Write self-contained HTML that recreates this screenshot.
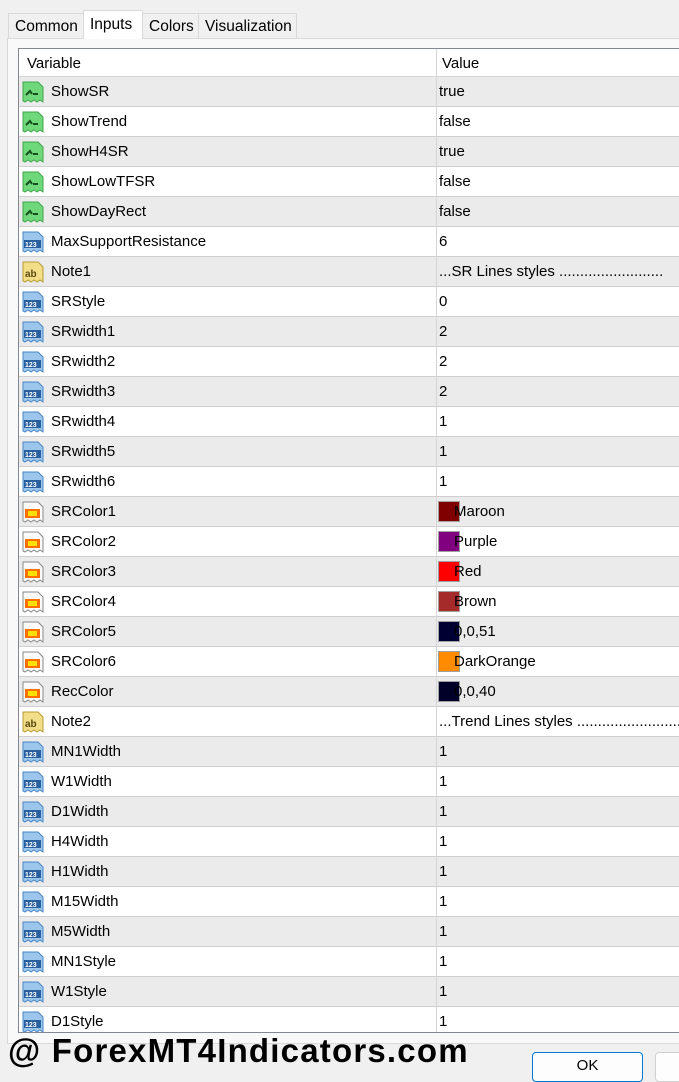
<!DOCTYPE html>
<html><head><meta charset="utf-8"><style>
*{margin:0;padding:0;box-sizing:border-box}
body{width:679px;height:1067px;overflow:hidden;background:#f0f0f0;font-family:"Liberation Sans",Arial,sans-serif;position:relative;color:#000}
.tab{position:absolute;top:13px;height:25px;border:1px solid #d9d9d9;border-bottom:none;background:#f0f0f0;font-size:15.5px;line-height:26px;padding:0 6px}
.tab.sel{top:10px;height:29px;background:#fff;z-index:2;line-height:28px}
.panel{position:absolute;left:7px;top:38px;width:700px;height:1006px;border:1px solid #d9d9d9;background:#f9f9f9}
.tbl{position:absolute;left:18px;top:48px;width:700px;height:985px;border:1px solid #828790;background:#fff;overflow:hidden}
.hdr{height:28px;border-bottom:1px solid #d5d5d5;font-size:15px;line-height:29px;position:relative}
.row{height:30px;border-bottom:1px solid #cfcfcf;position:relative;font-size:15px;line-height:30px}
.row.g{background:#ebebeb}
.c1{position:absolute;left:32px}
.c2{position:absolute;left:420px}
.div{position:absolute;left:417px;top:0;bottom:0;width:1px;background:#d5d5d5}
.ic{position:absolute;left:3px;top:4px;width:22px;height:22px}
.sw{position:absolute;left:419px;top:4px;width:22px;height:21px;border:1px solid #a0a0a0}
.wm{position:absolute;left:8px;top:1032px;font-size:33px;font-weight:bold;letter-spacing:1.2px;white-space:nowrap}
.ok{position:absolute;left:532px;top:1052px;width:111px;height:30px;border:1px solid #0078d4;border-radius:4px;background:#fdfdfd;text-align:center;font-size:15px;line-height:26px}
.b2{position:absolute;left:655px;top:1052px;width:60px;height:30px;border:1px solid #d0d0d0;border-radius:4px;background:#fdfdfd}
</style></head><body>
<div class="panel"></div>
<div class="tab" style="left:8px;width:76px">Common</div>
<div class="tab sel" style="left:83px;width:60px">Inputs</div>
<div class="tab" style="left:142px;width:57px">Colors</div>
<div class="tab" style="left:198px;width:99px">Visualization</div>
<div class="tbl">
<div class="div" style="z-index:3"></div>
<div class="hdr"><span style="position:absolute;left:8px">Variable</span><span style="position:absolute;left:423px">Value</span></div>
<svg width="0" height="0" style="position:absolute"><defs>
<g id="bool"><path d="M1 1h15l5 5v15l-3-2-3 2-3-2-3 2-3-2-3 2-2-1z" fill="#6fd87a" stroke="#3fa64b"/><path d="M4 14l4-4 2 3M11 13h5" stroke="#17501d" stroke-width="2" fill="none"/></g>
<g id="num"><path d="M1 1h15l5 5v15l-3-2-3 2-3-2-3 2-3-2-3 2-2-1z" fill="#9cc6ec" stroke="#4a86c4"/><rect x="2" y="9" width="17" height="8" fill="#2a5f9e"/><text x="3" y="16" font-size="7" font-weight="bold" fill="#fff" font-family="Liberation Sans">123</text></g>
<g id="str"><path d="M1 1h15l5 5v15l-3-2-3 2-3-2-3 2-3-2-3 2-2-1z" fill="#f2de88" stroke="#b89c32"/><text x="3" y="16" font-size="10" font-weight="bold" fill="#5a4a10" font-family="Liberation Sans">ab</text></g>
<g id="col"><path d="M1 1h15l5 5v15l-3-2-3 2-3-2-3 2-3-2-3 2-2-1z" fill="#fafafa" stroke="#888"/><rect x="3" y="8" width="15" height="9" fill="#ff7000"/><rect x="6" y="10" width="9" height="5" fill="#ffe000"/></g>
</defs></svg>
<div class="row g"><svg class="ic"><use href="#bool"/></svg><span class="c1">ShowSR</span><span class="c2">true</span></div>
<div class="row"><svg class="ic"><use href="#bool"/></svg><span class="c1">ShowTrend</span><span class="c2">false</span></div>
<div class="row g"><svg class="ic"><use href="#bool"/></svg><span class="c1">ShowH4SR</span><span class="c2">true</span></div>
<div class="row"><svg class="ic"><use href="#bool"/></svg><span class="c1">ShowLowTFSR</span><span class="c2">false</span></div>
<div class="row g"><svg class="ic"><use href="#bool"/></svg><span class="c1">ShowDayRect</span><span class="c2">false</span></div>
<div class="row"><svg class="ic"><use href="#num"/></svg><span class="c1">MaxSupportResistance</span><span class="c2">6</span></div>
<div class="row g"><svg class="ic"><use href="#str"/></svg><span class="c1">Note1</span><span class="c2">...SR Lines styles .........................</span></div>
<div class="row"><svg class="ic"><use href="#num"/></svg><span class="c1">SRStyle</span><span class="c2">0</span></div>
<div class="row g"><svg class="ic"><use href="#num"/></svg><span class="c1">SRwidth1</span><span class="c2">2</span></div>
<div class="row"><svg class="ic"><use href="#num"/></svg><span class="c1">SRwidth2</span><span class="c2">2</span></div>
<div class="row g"><svg class="ic"><use href="#num"/></svg><span class="c1">SRwidth3</span><span class="c2">2</span></div>
<div class="row"><svg class="ic"><use href="#num"/></svg><span class="c1">SRwidth4</span><span class="c2">1</span></div>
<div class="row g"><svg class="ic"><use href="#num"/></svg><span class="c1">SRwidth5</span><span class="c2">1</span></div>
<div class="row"><svg class="ic"><use href="#num"/></svg><span class="c1">SRwidth6</span><span class="c2">1</span></div>
<div class="row g"><svg class="ic"><use href="#col"/></svg><span class="c1">SRColor1</span><div class="sw" style="background:#800000"></div><span class="c2" style="left:435px">Maroon</span></div>
<div class="row"><svg class="ic"><use href="#col"/></svg><span class="c1">SRColor2</span><div class="sw" style="background:#800080"></div><span class="c2" style="left:435px">Purple</span></div>
<div class="row g"><svg class="ic"><use href="#col"/></svg><span class="c1">SRColor3</span><div class="sw" style="background:#ff0000"></div><span class="c2" style="left:435px">Red</span></div>
<div class="row"><svg class="ic"><use href="#col"/></svg><span class="c1">SRColor4</span><div class="sw" style="background:#a52a2a"></div><span class="c2" style="left:435px">Brown</span></div>
<div class="row g"><svg class="ic"><use href="#col"/></svg><span class="c1">SRColor5</span><div class="sw" style="background:#000033"></div><span class="c2" style="left:435px">0,0,51</span></div>
<div class="row"><svg class="ic"><use href="#col"/></svg><span class="c1">SRColor6</span><div class="sw" style="background:#ff8c00"></div><span class="c2" style="left:435px">DarkOrange</span></div>
<div class="row g"><svg class="ic"><use href="#col"/></svg><span class="c1">RecColor</span><div class="sw" style="background:#000028"></div><span class="c2" style="left:435px">0,0,40</span></div>
<div class="row"><svg class="ic"><use href="#str"/></svg><span class="c1">Note2</span><span class="c2">...Trend Lines styles .........................</span></div>
<div class="row g"><svg class="ic"><use href="#num"/></svg><span class="c1">MN1Width</span><span class="c2">1</span></div>
<div class="row"><svg class="ic"><use href="#num"/></svg><span class="c1">W1Width</span><span class="c2">1</span></div>
<div class="row g"><svg class="ic"><use href="#num"/></svg><span class="c1">D1Width</span><span class="c2">1</span></div>
<div class="row"><svg class="ic"><use href="#num"/></svg><span class="c1">H4Width</span><span class="c2">1</span></div>
<div class="row g"><svg class="ic"><use href="#num"/></svg><span class="c1">H1Width</span><span class="c2">1</span></div>
<div class="row"><svg class="ic"><use href="#num"/></svg><span class="c1">M15Width</span><span class="c2">1</span></div>
<div class="row g"><svg class="ic"><use href="#num"/></svg><span class="c1">M5Width</span><span class="c2">1</span></div>
<div class="row"><svg class="ic"><use href="#num"/></svg><span class="c1">MN1Style</span><span class="c2">1</span></div>
<div class="row g"><svg class="ic"><use href="#num"/></svg><span class="c1">W1Style</span><span class="c2">1</span></div>
<div class="row"><svg class="ic"><use href="#num"/></svg><span class="c1">D1Style</span><span class="c2">1</span></div>
</div>
<div class="wm">@ ForexMT4Indicators.com</div>
<div class="ok">OK</div>
<div class="b2"></div>
</body></html>
